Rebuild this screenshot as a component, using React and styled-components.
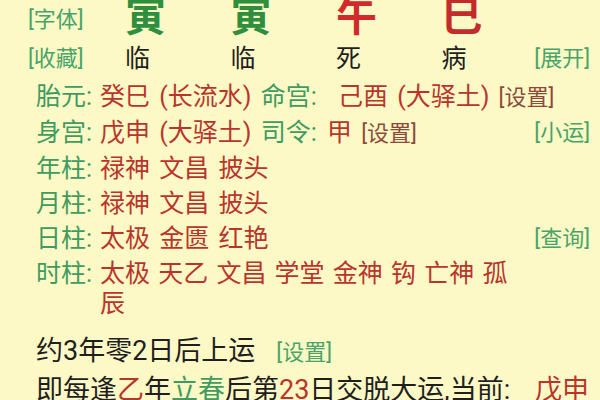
import React from 'react';
import styled, { createGlobalStyle } from 'styled-components';

const GlobalStyle = createGlobalStyle`
  html, body {
    margin: 0;
    padding: 0;
    background: #fcf9c6;
  }
  body {
    font-family: Roboto, "Noto Sans CJK SC", sans-serif;
    overflow: hidden;
  }
`;

const GREEN = '#3f9b5f';
const RED = '#b9352b';
const BROWN = '#8d4a3b';
const INK = '#1f1f1f';

function App() {
    return (
        <>
            <GlobalStyle />
            <Page>
                <PillarGrid $top>
                    <Link $lh={34}>[字体]</Link>
                    <BigChar $color="#2f8f3e">寅</BigChar>
                    <BigChar $color="#2f8f3e">寅</BigChar>
                    <BigChar $color="#d02b2a">午</BigChar>
                    <BigChar $color="#c42b2b">巳</BigChar>
                    <span />
                </PillarGrid>
                <PillarGrid>
                    <Link $lh={36}>[收藏]</Link>
                    <SmallChar>临</SmallChar>
                    <SmallChar>临</SmallChar>
                    <SmallChar>死</SmallChar>
                    <SmallChar>病</SmallChar>
                    <Link $lh={36} $right>[展开]</Link>
                </PillarGrid>

                <InfoList>
                    <InfoRow>
                        <Label>胎元:</Label>
                        <Values>
                            癸巳 (长流水) <Green $pad={12}>命宫:</Green> 己酉 (大驿土) <Brown>[设置]</Brown>
                        </Values>
                    </InfoRow>
                    <InfoRow>
                        <Label>身宫:</Label>
                        <Values>
                            戊申 (大驿土) <Green $pad={1}>司令:</Green> 甲 <Brown>[设置]</Brown>
                        </Values>
                        <Link $lh={30}>[小运]</Link>
                    </InfoRow>
                    <InfoRow>
                        <Label>年柱:</Label>
                        <Values>禄神 文昌 披头</Values>
                    </InfoRow>
                    <InfoRow>
                        <Label>月柱:</Label>
                        <Values>禄神 文昌 披头</Values>
                    </InfoRow>
                    <InfoRow>
                        <Label>日柱:</Label>
                        <Values>太极 金匮 红艳</Values>
                        <Link $lh={30}>[查询]</Link>
                    </InfoRow>
                    <InfoRow $reserve={72}>
                        <Label>时柱:</Label>
                        <Values $tight>太极 天乙 文昌 学堂 金神 钩 亡神 孤辰</Values>
                    </InfoRow>
                </InfoList>

                <Footer>
                    <FooterLine>
                        约3年零2日后上运<Link $lh={30} $gap={21}>[设置]</Link>
                    </FooterLine>
                    <FooterLine>
                        即每逢<Red>乙</Red>年<Green>立春</Green>后第<Red>23</Red>日交脱大运,当前: <Red $gap={18}>戊申</Red>
                    </FooterLine>
                </Footer>
            </Page>
        </>
    );
}

const Page = styled.div`
    width: 600px;
    height: 400px;
    overflow: hidden;
    box-sizing: border-box;
    padding: 0 10px 0 28px;
    background: #fcf9c6;
`;
const PillarGrid = styled.div`
    display: grid;
    grid-template-columns: 97px repeat(3, 105.5px) 80px 1fr;
    align-items: end;
    margin-top: ${props => props.$top ? -3 : 4}px;
`;
const BigChar = styled.span`
    font-size: 41px;
    line-height: 40px;
    font-weight: 700;
    color: ${props => props.$color};
`;
const SmallChar = styled.span`
    font-size: 25px;
    line-height: 36px;
    color: ${INK};
`;
const Link = styled.span`
    font-size: 22px;
    line-height: ${props => props.$lh}px;
    color: #48a468;
    justify-self: ${props => props.$right ? 'end' : 'start'};
    margin-left: ${props => props.$gap || 0}px;
    white-space: nowrap;
`;
const InfoList = styled.div`
    display: flex;
    flex-direction: column;
    gap: 5px;
    margin-top: 5px;
`;
const InfoRow = styled.div`
    display: grid;
    grid-template-columns: 64px 1fr auto;
    align-items: start;
    padding-left: 8px;
    padding-right: ${props => props.$reserve || 0}px;
    font-size: 25px;
    line-height: 30px;
`;
const Label = styled.span`
    color: ${GREEN};
`;
const Values = styled.div`
    color: ${RED};
    word-spacing: ${props => props.$tight ? 2 : 3}px;
`;
const Green = styled.span`
    color: ${GREEN};
    margin-right: ${props => props.$pad || 0}px;
`;
const Red = styled.span`
    color: ${RED};
    margin-left: ${props => props.$gap || 0}px;
`;
const Brown = styled.span`
    color: ${BROWN};
    font-size: 22px;
`;
const Footer = styled.div`
    display: flex;
    flex-direction: column;
    gap: 7px;
    margin-top: 17px;
    padding-left: 8px;
`;
const FooterLine = styled.div`
    display: flex;
    align-items: baseline;
    font-size: 27px;
    line-height: 30px;
    color: ${INK};
    white-space: pre;
`;

export default App;
